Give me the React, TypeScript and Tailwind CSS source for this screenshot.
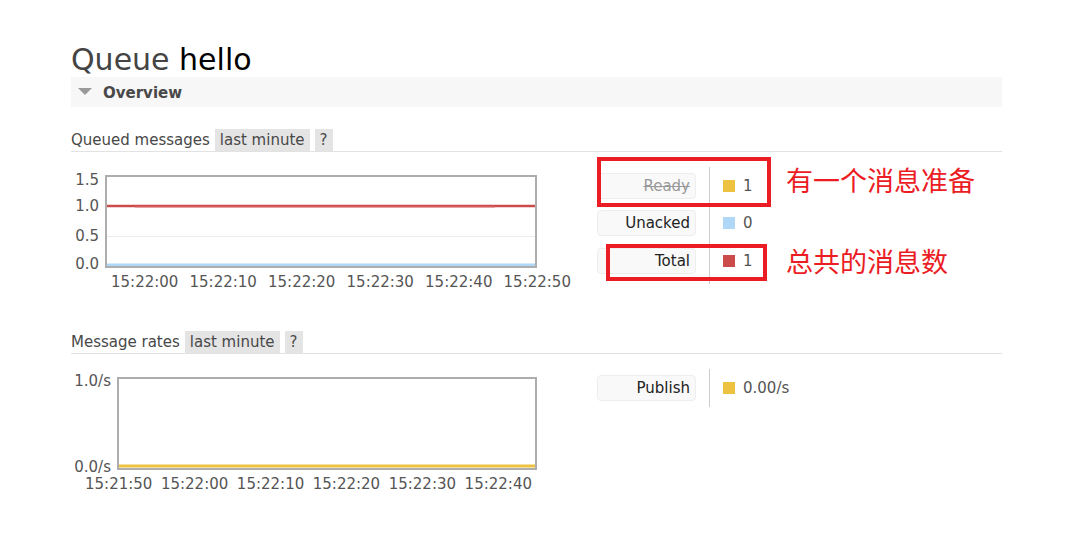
import React from 'react';

const font = { fontFamily: '"DejaVu Sans", Verdana, sans-serif' };

interface Tick {
  label: string;
  top: number;
}

const Badge = ({ children }: { children: React.ReactNode }) => (
  <span className="bg-[#e4e4e4] h-[22px] px-[5px] leading-[23px] text-[#484848]">{children}</span>
);

const SectionHeader = ({ title }: { title: string }) => (
  <div className="flex items-center gap-[5px] h-[23px] border-b border-[#e2e2e2] text-[15px] text-[#484848]">
    <span className="pt-[1px]">{title}</span>
    <Badge>last minute</Badge>
    <Badge>?</Badge>
  </div>
);

const Chart = ({
  axisWidth,
  boxWidth,
  ticks,
  times,
  timesLeft,
  timesWidth,
  children,
}: {
  axisWidth: number;
  boxWidth: number;
  ticks: Tick[];
  times: string[];
  timesLeft: number;
  timesWidth: number;
  children: React.ReactNode;
}) => (
  <div className="pt-[8px] text-[15px] text-[#555]">
    <div className="flex">
      <div className="relative h-[93px]" style={{ width: axisWidth }}>
        {ticks.map((t) => (
          <span key={t.label} className="absolute right-[6px] leading-[17px]" style={{ top: t.top }}>
            {t.label}
          </span>
        ))}
      </div>
      <div className="relative h-[93px] border-2 border-[#adadad] bg-white" style={{ width: boxWidth }}>
        {children}
      </div>
    </div>
    <div className="flex justify-between mt-[6px] leading-[17px]" style={{ marginLeft: timesLeft, width: timesWidth }}>
      {times.map((t) => (
        <span key={t}>{t}</span>
      ))}
    </div>
  </div>
);

const LegendRow = ({
  label,
  value,
  color,
  off,
}: {
  label: string;
  value: string;
  color: string;
  off?: boolean;
}) => (
  <div className="flex items-center h-[37.5px]">
    <div className="w-[112px] h-full flex items-center">
      <div
        className={`w-[99px] h-[26px] rounded-[4px] border border-[#eeeeee] bg-[#f9f9f9] text-right pr-[5px] leading-[24px] ${
          off ? 'line-through text-[#999]' : 'text-[#222]'
        }`}
      >
        {label}
      </div>
    </div>
    <div className="h-full flex items-center border-l border-[#cccccc] pl-[13px] gap-[8px] text-[#555]">
      <span className="w-[12px] h-[12px]" style={{ background: color }} />
      <span>{value}</span>
    </div>
  </div>
);

export default function App() {
  return (
    <div className="relative w-[1069px] h-[558px] bg-white overflow-hidden" style={font}>
      <div className="pl-[71px] pt-[42px] w-[1002px]">
        <h1 className="text-[30px] leading-[35px] text-[#444]">
          Queue <span className="text-black">hello</span>
        </h1>

        <div className="flex items-center h-[30px] bg-[#f7f7f7] pl-[7px] gap-[11px]">
          <svg width="14" height="8" viewBox="0 0 14 8">
            <path d="M0 0 H14 L7 7 Z" fill="#999" />
          </svg>
          <span className="text-[15px] font-bold text-[#484848] pt-[2px]">Overview</span>
        </div>

        <div className="mt-[22px]">
          <SectionHeader title="Queued messages" />
        </div>

        <div className="flex mt-[15px] h-[164px]">
          <div className="w-[526px]">
            <Chart
              axisWidth={34}
              boxWidth={432}
              ticks={[
                { label: '1.5', top: -3 },
                { label: '1.0', top: 23 },
                { label: '0.5', top: 53 },
                { label: '0.0', top: 81 },
              ]}
              times={['15:22:00', '15:22:10', '15:22:20', '15:22:30', '15:22:40', '15:22:50']}
              timesLeft={40}
              timesWidth={460}
            >
              <svg className="absolute inset-0" width="428" height="89">
                <line x1="0" y1="59.5" x2="428" y2="59.5" stroke="#ececec" strokeWidth="1" />
                <line x1="0" y1="29" x2="428" y2="29" stroke="#cb4b4b" strokeWidth="2.5" />
                <line x1="28" y1="30" x2="388" y2="30" stroke="#e07272" strokeWidth="1" />
                <line x1="0" y1="88" x2="428" y2="88" stroke="#afd8f8" strokeWidth="3" />
              </svg>
            </Chart>
          </div>

          <div className="text-[15px]">
            <LegendRow label="Ready" value="1" color="#edc240" off />
            <LegendRow label="Unacked" value="0" color="#afd8f8" />
            <LegendRow label="Total" value="1" color="#cb4b4b" />
            <div className="h-[4px] ml-[112px] border-l border-[#cccccc]" />
          </div>
        </div>

        <SectionHeader title="Message rates" />

        <div className="flex mt-[15px]">
          <div className="w-[526px]">
            <Chart
              axisWidth={46}
              boxWidth={420}
              ticks={[
                { label: '1.0/s', top: -4 },
                { label: '0.0/s', top: 82 },
              ]}
              times={['15:21:50', '15:22:00', '15:22:10', '15:22:20', '15:22:30', '15:22:40']}
              timesLeft={14}
              timesWidth={447}
            >
              <svg className="absolute inset-0" width="416" height="89">
                <line x1="0" y1="87" x2="416" y2="87" stroke="#edc240" strokeWidth="3" />
              </svg>
            </Chart>
          </div>
          <div className="text-[15px]">
            <LegendRow label="Publish" value="0.00/s" color="#edc240" />
          </div>
        </div>
      </div>

      {/* red annotations drawn over the screenshot */}
      <div className="absolute left-[597px] top-[157px] w-[174px] h-[50px] border-[4px] border-[#ec1c24]" />
      <div className="absolute left-[606px] top-[244px] w-[161px] h-[37px] border-[4px] border-[#ec1c24]" />
      <div
        className="absolute left-[786px] top-[163px] text-[27px] leading-[34px] text-[#ec1c24]"
        style={{ fontFamily: '"Noto Sans CJK SC", sans-serif' }}
      >
        有一个消息准备
      </div>
      <div
        className="absolute left-[786px] top-[244px] text-[27px] leading-[34px] text-[#ec1c24]"
        style={{ fontFamily: '"Noto Sans CJK SC", sans-serif' }}
      >
        总共的消息数
      </div>
    </div>
  );
}
